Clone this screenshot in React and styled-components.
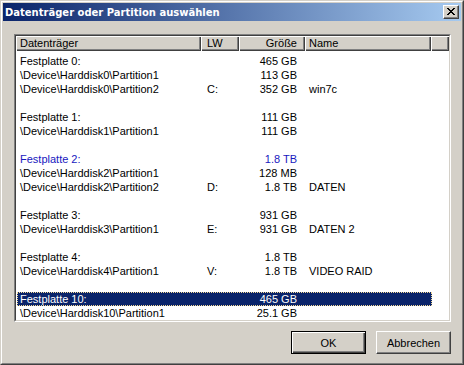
import React from "react";
import styled, { createGlobalStyle } from "styled-components";

const Global = createGlobalStyle`
  html, body { margin: 0; padding: 0; background: #d4d0c8; }
  body { font-family: "Liberation Sans", Arial, sans-serif; font-size: 11px; }
`;

const Window = styled.div`
  box-sizing: border-box;
  width: 464px;
  height: 365px;
  background: #d4d0c8;
  border: 1px solid;
  border-color: #d4d0c8 #404040 #404040 #d4d0c8;
  display: flex;
`;

const Frame = styled.div`
  flex: 1;
  border: 1px solid;
  border-color: #ffffff #808080 #808080 #ffffff;
  padding: 1px;
  display: flex;
  flex-direction: column;
`;

const TitleBar = styled.div`
  height: 18px;
  flex: none;
  display: flex;
  align-items: center;
  justify-content: space-between;
  padding: 0 2px 0 2px;
  background: linear-gradient(to right, #0a246a, #a6caf0);
`;

const Title = styled.span`
  color: #fff;
  font-weight: bold;
  font-family: "DejaVu Sans", Tahoma, sans-serif;
  font-size: 10px;
`;

const CloseButton = styled.div`
  box-sizing: border-box;
  width: 16px;
  height: 14px;
  background: #d4d0c8;
  border: 1px solid;
  border-color: #ffffff #404040 #404040 #ffffff;
  box-shadow: inset -1px -1px #808080;
  display: flex;
  align-items: center;
  justify-content: center;
  padding: 0 0 1px 0;
`;

const Content = styled.div`
  flex: 1;
  display: flex;
  flex-direction: column;
  padding: 13px 10px 8px 11px;
`;

const ListOuter = styled.div`
  height: 288px;
  box-sizing: border-box;
  border: 1px solid;
  border-color: #808080 #ffffff #ffffff #808080;
  display: flex;
`;

const ListInner = styled.div`
  flex: 1;
  border: 1px solid;
  border-color: #404040 #d4d0c8 #d4d0c8 #404040;
  background: #fff;
  overflow: hidden;
  display: flex;
  flex-direction: column;
`;

const cols = "185px 38px 66px 126px 1fr";

const Header = styled.div`
  display: grid;
  grid-template-columns: ${cols};
  height: 15px;
  flex: none;
`;

const HeaderCell = styled.div`
  background: #d4d0c8;
  box-shadow: inset 1px 1px #ffffff, inset -1px -1px #404040, inset -2px -2px #808080;
  display: flex;
  align-items: center;
  justify-content: ${(p) => (p.$right ? "flex-end" : "flex-start")};
  padding: 0 ${(p) => p.$pr || 0}px 1px ${(p) => p.$pl || 0}px;
  color: #000;
  white-space: nowrap;
  line-height: 13px;
`;

const Body = styled.div`
  padding-top: 3px;
  display: flex;
  flex-direction: column;
`;

const Row = styled.div`
  display: grid;
  grid-template-columns: 184px 38px 66px 127px;
  width: 415px;
  margin-left: 1px;
  height: 14px;
  box-sizing: border-box;
  color: ${(p) => (p.$selected ? "#ffffff" : p.$hot ? "#1818c0" : "#000")};
  background: ${(p) => (p.$selected ? "#0a246a" : "transparent")};
  outline: ${(p) => (p.$selected ? "1px dotted #f5db95" : "none")};
  outline-offset: -1px;
`;

const Cell = styled.div`
  white-space: nowrap;
  line-height: 14px;
  overflow: hidden;
  text-align: ${(p) => (p.$right ? "right" : "left")};
  padding: 0 ${(p) => p.$pr || 0}px 0 ${(p) => p.$pl || 0}px;
`;

const Footer = styled.div`
  display: flex;
  justify-content: flex-end;
  gap: 10px;
  margin-top: 9px;
`;

const Button = styled.button`
  box-sizing: border-box;
  width: 75px;
  height: 23px;
  padding: 0;
  font-family: "Liberation Sans", Arial, sans-serif;
  font-size: 11px;
  color: #000;
  background: #d4d0c8;
  border: 1px solid;
  border-color: ${(p) => (p.$default ? "#000 #000 #000 #000" : "#ffffff #404040 #404040 #ffffff")};
  box-shadow: ${(p) =>
    p.$default
      ? "inset 1px 1px #ffffff, inset -1px -1px #404040, inset -2px -2px #808080"
      : "inset -1px -1px #808080"};
`;

const groups = [
  {
    disk: "Festplatte 0:",
    size: "465 GB",
    parts: [
      ["\\Device\\Harddisk0\\Partition1", "", "113 GB", ""],
      ["\\Device\\Harddisk0\\Partition2", "C:", "352 GB", "win7c"],
    ],
  },
  {
    disk: "Festplatte 1:",
    size: "111 GB",
    parts: [["\\Device\\Harddisk1\\Partition1", "", "111 GB", ""]],
  },
  {
    disk: "Festplatte 2:",
    size: "1.8 TB",
    hot: true,
    parts: [
      ["\\Device\\Harddisk2\\Partition1", "", "128 MB", ""],
      ["\\Device\\Harddisk2\\Partition2", "D:", "1.8 TB", "DATEN"],
    ],
  },
  {
    disk: "Festplatte 3:",
    size: "931 GB",
    parts: [["\\Device\\Harddisk3\\Partition1", "E:", "931 GB", "DATEN 2"]],
  },
  {
    disk: "Festplatte 4:",
    size: "1.8 TB",
    parts: [["\\Device\\Harddisk4\\Partition1", "V:", "1.8 TB", "VIDEO RAID"]],
  },
  {
    disk: "Festplatte 10:",
    size: "465 GB",
    selected: true,
    parts: [["\\Device\\Harddisk10\\Partition1", "", "25.1 GB", ""]],
  },
];

function DataRow({ cells, hot, selected }) {
  return (
    <Row $hot={hot} $selected={selected}>
      <Cell $pl={3}>{cells[0]}</Cell>
      <Cell $pl={6}>{cells[1]}</Cell>
      <Cell $right $pr={8}>{cells[2]}</Cell>
      <Cell $pl={4}>{cells[3]}</Cell>
    </Row>
  );
}

export default function App() {
  const rows = [];
  groups.forEach((g, gi) => {
    rows.push(
      <DataRow key={`d${gi}`} cells={[g.disk, "", g.size, ""]} hot={g.hot} selected={g.selected} />
    );
    g.parts.forEach((p, pi) => rows.push(<DataRow key={`p${gi}-${pi}`} cells={p} />));
    if (gi < groups.length - 1) rows.push(<DataRow key={`b${gi}`} cells={["", "", "", ""]} />);
  });

  return (
    <>
      <Global />
      <Window>
        <Frame>
          <TitleBar>
            <Title>Datenträger oder Partition auswählen</Title>
            <CloseButton>
              <svg width="8" height="7" viewBox="0 0 8 7" shapeRendering="crispEdges">
                <path
                  d="M0 0h2v1H0zM6 0h2v1H6zM1 1h2v1H1zM5 1h2v1H5zM2 2h4v1H2zM3 3h2v1H3zM2 4h4v1H2zM1 5h2v1H1zM5 5h2v1H5zM0 6h2v1H0zM6 6h2v1H6z"
                  fill="#000"
                />
              </svg>
            </CloseButton>
          </TitleBar>
          <Content>
            <ListOuter>
              <ListInner>
                <Header>
                  <HeaderCell $pl={4}>Datenträger</HeaderCell>
                  <HeaderCell $pl={6}>LW</HeaderCell>
                  <HeaderCell $right $pr={8}>Größe</HeaderCell>
                  <HeaderCell $pl={4}>Name</HeaderCell>
                  <HeaderCell />
                </Header>
                <Body>{rows}</Body>
              </ListInner>
            </ListOuter>
            <Footer>
              <Button $default>OK</Button>
              <Button>Abbrechen</Button>
            </Footer>
          </Content>
        </Frame>
      </Window>
    </>
  );
}
